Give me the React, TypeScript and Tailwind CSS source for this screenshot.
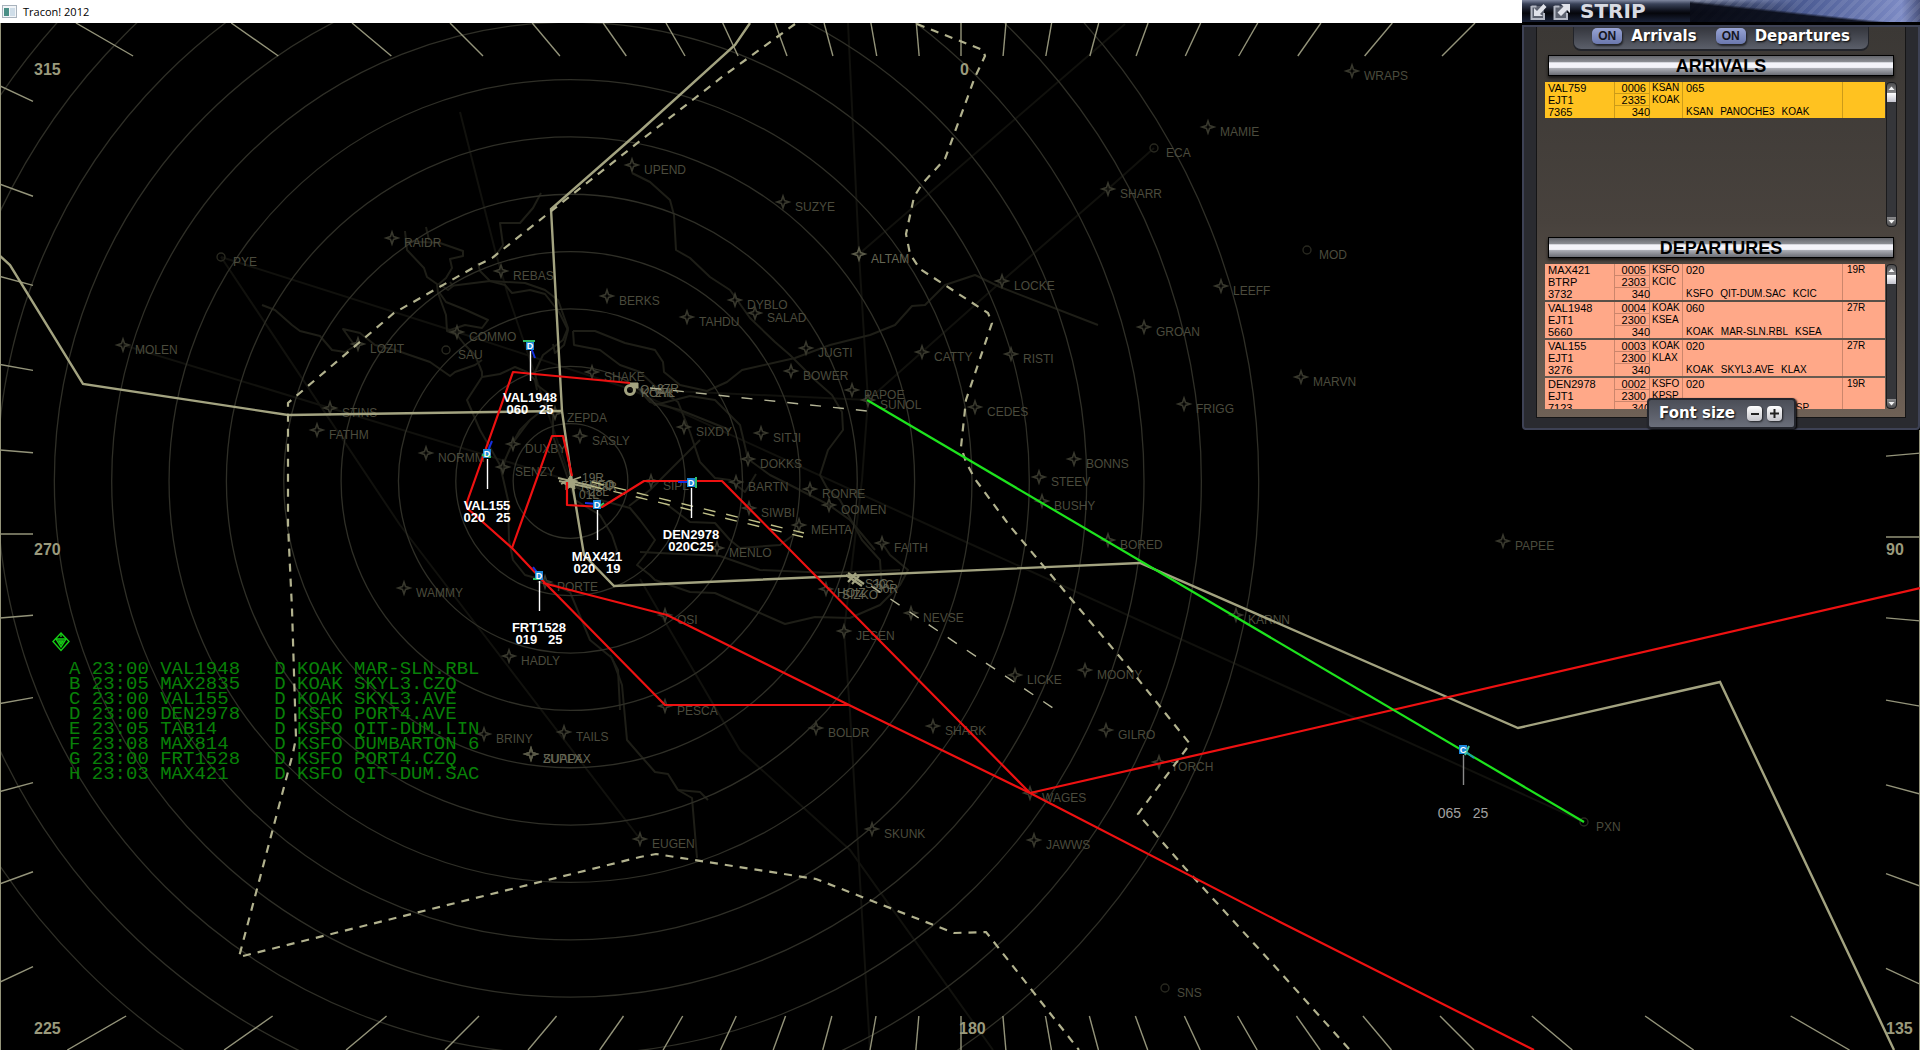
import React from "react";

type Pt = [number, number];

const CENTER: Pt = [570.5, 481];
const RINGS = [1, 2, 3, 4, 5, 6, 7, 8, 9, 10, 11, 12];
const RING_STEP = 57.35;

const FIXES: [string, number, number][] = [
  ["RAIDR", 392, 238], ["REBAS", 501, 271], ["MOLEN", 123, 345], ["COMMO", 457, 332],
  ["LOZIT", 358, 344], ["STINS", 330, 408], ["FATHM", 317, 430], ["NORMM", 426, 453],
  ["DUXBY", 513, 444], ["SENZY", 503, 467], ["SASLY", 580, 436], ["ZEPDA", 555, 413],
  ["BERKS", 607, 296], ["SHAKE", 592, 372], ["UPEND", 632, 165], ["SUZYE", 783, 202],
  ["DYBLO", 735, 300], ["SALAD", 755, 313], ["TAHDU", 687, 317], ["JUGTI", 806, 348],
  ["BOWER", 791, 371], ["PAPOE", 852, 390], ["SUNOL", 868, 400], ["CATTY", 922, 352],
  ["RISTI", 1011, 354], ["CEDES", 975, 407], ["LOCKE", 1002, 281], ["SHARR", 1108, 189],
  ["MAMIE", 1208, 127], ["LEEFF", 1221, 286], ["GROAN", 1144, 327], ["FRIGG", 1184, 404],
  ["BONNS", 1074, 459], ["STEEV", 1039, 477], ["BUSHY", 1042, 501], ["SIXDY", 684, 427],
  ["SITJI", 761, 433], ["DOKKS", 748, 459], ["BARTN", 736, 482], ["RONRE", 810, 489],
  ["OOMEN", 829, 505], ["SIWBI", 749, 508], ["MEHTA", 799, 525], ["SIPL", 651, 481],
  ["WRAPS", 1352, 71], ["MARVN", 1301, 377], ["PAPEE", 1503, 541], ["FAITH", 882, 543],
  ["MENLO", 717, 548], ["NEVSE", 911, 613], ["JESEN", 844, 631], ["MOONY", 1085, 670],
  ["LICKE", 1015, 675], ["BORED", 1108, 540], ["KARNN", 1236, 615], ["GILRO", 1106, 730],
  ["TORCH", 1159, 762], ["SHARK", 933, 726], ["BOLDR", 816, 728], ["PESCA", 665, 706],
  ["WAGES", 1030, 793], ["JAWWS", 1034, 840], ["SKUNK", 872, 829], ["EUGEN", 640, 839],
  ["PORTE", 545, 582], ["WAMMY", 404, 588], ["HADLY", 509, 656], ["BRINY", 484, 734],
  ["TAILS", 564, 732], ["OSI", 665, 615],
];

const BRIGHT_FIXES: [string, number, number][] = [
  ["ALTAM", 859, 254], ["ZUPLX", 531, 754], ["SUAPAX", 531, 754],
];

const VORS: [string, number, number][] = [
  ["PYE", 221, 257], ["SAU", 446, 350], ["ECA", 1154, 148], ["MOD", 1307, 250],
  ["PXN", 1584, 822], ["SNS", 1165, 988],
];

const AIRPORT_LABELS: [string, number, number][] = [
  ["KOAK", 641, 397], ["OAK", 640, 394], ["27R", 657, 393], ["27L", 655, 397],
  ["19R", 582, 482], ["KSFO", 581, 490], ["SFO", 590, 489], ["28R", 595, 491],
  ["01L", 579, 499], ["28L", 589, 496],
  ["SJC", 865, 588], ["30C", 872, 589], ["30R", 876, 593],
  ["HOIZ", 837, 597], ["SIZKO", 842, 599],
];

const AIRWAYS = [
  "221,257 457,332 630,389 966,542 1280,684 1584,822",
  "221,257 400,525 640,839",
  "123,345 330,408 571,481",
  "460,112 496,254 508,295 571,481",
  "640,579 740,750 850,850 993,1050",
  "848,23 859,254 868,400 862,480 844,631 850,712 870,1050",
  "1154,148 1108,189 1002,281 922,352 868,400 630,389",
  "859,254 1125,24",
];

const COAST = [
  "405,231 407,250 424,268 427,277 437,284 438,293 446,315 447,331 457,335 465,345 475,355 482,372 482,377 500,374 515,367 527,372 535,380 537,390",
  "426,227 429,240",
  "406,241 440,243 463,251 463,256 450,259 452,268 446,278 439,284 448,290 453,286 450,282",
  "541,193 533,208 520,223 500,223 503,245 494,258",
  "450,286 490,281 525,283 545,290 558,300 568,328 563,340 543,355 535,372 537,385 550,395 545,408 530,420 520,430 512,444 505,460 503,470",
  "439,292 446,302 466,310 488,320 482,328 465,325 447,331",
  "478,263 480,271 490,281 505,285 512,293 530,290 545,294 559,312 568,330 564,345 555,353 553,344",
  "573,331 574,345 600,350 620,365 640,372 655,386 678,402 690,432 700,462 715,478 730,480 745,492 756,474",
  "573,331 595,331 625,343 655,350 663,362 664,372 680,385 707,391 727,382 742,370 795,358 830,345 870,335 895,325 912,306 925,305 945,285 975,275 1000,287 1098,325",
  "262,305 275,310 292,325 300,331 320,336 332,350 345,352 355,346 343,329 360,333 375,345 395,350 430,362 450,376 455,372 475,365 482,360",
  "482,377 467,400 480,430 500,465 508,500 509,540 513,560 525,575 543,580 570,592 590,640 612,658 622,685 627,740 640,755 655,772 668,774 678,790 692,798 697,858",
  "553,411 553,436 565,470 575,500 600,515 612,535 617,550 614,560",
  "512,444 530,420",
  "610,655 618,670 620,710",
  "678,790 700,792 708,800",
  "632,173 650,182 670,200 674,215 676,250 690,258 710,277 730,290 750,318 775,342 790,355 815,380 832,395 842,412 843,430 828,450 820,475 827,488 840,500 862,540 880,560 882,590",
  "636,386 655,405 690,396 715,400 740,425 748,459 770,475 790,485 829,505 850,520 875,550",
  "636,386 650,402 680,410 730,430",
  "571,484 600,500 630,508 640,520 655,540 645,555 637,565 650,575 655,580 690,592 715,593 760,613 785,624 815,617 850,618 880,605 900,585 908,570 890,555 882,543",
  "629,506 650,490 700,440",
  "665,503 690,522 715,523 730,540 740,548 780,545 800,530",
  "640,552 720,556 760,570 830,573 900,570",
];

const SOLID_BOUNDARIES = [
  "0,256 10,265 83,384 288,415 562,411",
  "750,23 735,45 640,131 551,209 562,411 572,482 584,555 614,586 1140,563 1518,728 1720,682 1894,1050",
];

const DASHED_BOUNDARIES = [
  "795,24 722,77 640,141 545,216 492,258 478,265 394,313 288,403 288,525 292,609 296,738 293,753 239,957 640,857 656,854 816,879 954,933 986,932 1079,1050",
  "917,24 983,50 985,56 975,77 945,159 922,184 914,197 906,234 910,254 920,269 988,313 992,323 966,400 961,447 966,462 975,479 1009,525 1130,669 1190,744 1138,814 1185,868 1280,972 1350,1050",
];

const DEPARTURE_ROUTES = [
  "630,383 513,372 467,502 467,508 485,524 512,548 545,583",
  "572,476 563,436 552,436 512,548",
  "567,482 567,505 602,507 644,481 722,481 1030,793",
  "545,583 665,705 849,705",
  "543,583 667,615 849,705 1030,793 1280,922 1534,1050",
  "1030,793 1280,736 1920,588",
];

const AIRCRAFT = [
  { id: "VAL1948", alt: "060   25", x: 530, y: 345, tail: [5, 13], head: [-7, -4, 5, -4] },
  { id: "VAL155", alt: "020   25", x: 487, y: 453, tail: [5, -12], head: [-5, 2, 4, 4] },
  { id: "MAX421", alt: "020   19", x: 597, y: 504, tail: [-12, -1], head: [3, 2, 7, -1] },
  { id: "DEN2978", alt: "020C25", x: 691, y: 482, tail: [-13, 0], head: [5, -5, 5, 6] },
  { id: "FRT1528", alt: "019   25", x: 539, y: 575, tail: [-6, -8], head: [-6, 4, 0, 4] },
];

const FLIGHTS = [
  "A 23:00 VAL1948   D KOAK MAR-SLN.RBL",
  "B 23:05 MAX2835   D KOAK SKYL3.CZQ",
  "C 23:00 VAL155    D KOAK SKYL3.AVE",
  "D 23:00 DEN2978   D KSFO PORT4.AVE",
  "E 23:05 TAB14     D KSFO QIT-DUM.LIN",
  "F 23:08 MAX814    D KSFO DUMBARTON 6",
  "G 23:00 FRT1528   D KSFO PORT4.CZQ",
  "H 23:03 MAX421    D KSFO QIT-DUM.SAC",
];

const BEARINGS: [string, number, number][] = [
  ["315", 34, 75], ["0", 960, 75], ["270", 34, 555], ["90", 1886, 555],
  ["225", 34, 1034], ["180", 959, 1034], ["135", 1886, 1034],
];

/* Compass ticks run from the inner frame to the map's edge, every five degrees. */
function compassTicks() {
  const cx = 961;
  const ticks: [number, number, number, number][] = [];
  for (let deg = 0; deg < 360; deg += 5) {
    const a = (deg * Math.PI) / 180;
    const dx = Math.sin(a);
    const dy = -Math.cos(a);
    const cy = dx < -0.01 ? 534 : 537;
    const reach = (left: number, top: number, right: number, bottom: number) => {
      const tx = dx > 1e-9 ? (right - cx) / dx : dx < -1e-9 ? (left - cx) / dx : Infinity;
      const ty = dy > 1e-9 ? (bottom - cy) / dy : dy < -1e-9 ? (top - cy) / dy : Infinity;
      return Math.min(tx, ty);
    };
    const a0 = reach(33, 56, 1886, 1016);
    const a1 = reach(0, 23, 1920, 1050);
    ticks.push([cx + dx * a0, cy + dy * a0, cx + dx * a1, cy + dy * a1]);
  }
  return ticks;
}

function Star({ x, y }: { x: number; y: number }) {
  return (
    <path
      d={`M${x} ${y - 6}l1.5 4.5l4.5 1.5l-4.5 1.5l-1.5 4.5l-1.5 -4.5l-4.5 -1.5l4.5 -1.5z`}
      fill="none"
    />
  );
}

function RadarMap() {
  return (
    <svg
      viewBox="0 23 1920 1027"
      role="img"
      aria-label="Radar scope"
      className="block h-auto w-full bg-black font-['Liberation_Sans',Arial,sans-serif] [&_text]:whitespace-pre"
    >
      <g fill="none" stroke="#11110d" strokeWidth="2">
        {AIRWAYS.map((p) => <polyline key={p} points={p} />)}
      </g>
      <g fill="none" stroke="#1e1e17" strokeWidth="2" strokeLinejoin="round">
        {COAST.map((p) => <polyline key={p} points={p} />)}
      </g>
      <g fill="none" stroke="#2f2f27" strokeWidth="1.3">
        {RINGS.map((n) => <circle key={n} cx={CENTER[0]} cy={CENTER[1]} r={n * RING_STEP} />)}
      </g>
      <g stroke="#94947a" strokeWidth="1.4">
        {compassTicks().map(([a, b, c, d], i) => <line key={i} x1={a} y1={b} x2={c} y2={d} />)}
        <path d="M.5 23V1050M1919.5 23V1050" strokeWidth="1" />
      </g>

      <g stroke="#38382d" strokeWidth="1.6">
        {FIXES.map(([n, x, y]) => <Star key={n} x={x} y={y} />)}
      </g>
      <g stroke="#5a5a48" strokeWidth="1.6">
        {BRIGHT_FIXES.map(([n, x, y]) => <Star key={n} x={x} y={y} />)}
      </g>
      <g stroke="#38382d" strokeWidth="1.6">
        <Star x={826} y={589} />
      </g>
      <g fill="none" stroke="#28281f" strokeWidth="1.4">
        {VORS.map(([n, x, y]) => <circle key={n} cx={x} cy={y} r="4" />)}
      </g>
      <g className="fill-[#4b4b3d] text-[12px]">
        {[...FIXES, ...VORS].map(([n, x, y]) => <text key={n} x={x + 12} y={y + 9}>{n}</text>)}
      </g>
      <g className="fill-[#666654] text-[12px]">
        {BRIGHT_FIXES.map(([n, x, y]) => <text key={n} x={x + 12} y={y + 9}>{n}</text>)}
        {AIRPORT_LABELS.map(([n, x, y]) => <text key={n} x={x} y={y}>{n}</text>)}
      </g>

      <g fill="none" stroke="#a3a380" strokeWidth="2.4">
        {SOLID_BOUNDARIES.map((p) => <polyline key={p} points={p} />)}
      </g>
      <g fill="none" stroke="#b2b28e" strokeWidth="2.2" strokeDasharray="8 7">
        {DASHED_BOUNDARIES.map((p) => <polyline key={p} points={p} />)}
      </g>
      <g fill="none" stroke="#b4b496" strokeWidth="1.4" strokeDasharray="11 12">
        <path d="M650 388L867 411" />
        <path d="M868 584L1056 710" strokeDashoffset="-4" />
      </g>
      <g fill="none" stroke="#c0c088" strokeWidth="1.4" strokeDasharray="12 11">
        <path d="M592 482L804 533" />
        <path d="M591 486L803 537" />
      </g>

      <g fill="#a3a380" stroke="#a3a380">
        <circle cx="630" cy="390" r="4.5" fill="none" strokeWidth="3" />
        <path d="M630 383h8v5h-5z" />
        <path d="M558 478l34 8M559 481l32 7M561 484l20 -7" fill="none" strokeWidth="1.8" />
        <path d="M570 476l2.500 4l5 1l-3.500 3l1 5l-5 -2l-4 3l0 -5l-4 -3l5 -1z" />
        <path d="M846 575l16 11M848 573l16 11M848 582l8 -9M852 584l7 -8" fill="none" strokeWidth="2.2" />
      </g>

      <g fill="none" stroke="#ee1111" strokeWidth="2.2" strokeLinejoin="round">
        {DEPARTURE_ROUTES.map((p) => <polyline key={p} points={p} />)}
      </g>
      <line x1="867" y1="400" x2="1584" y2="822" stroke="#1de31d" strokeWidth="2.2" />

      {AIRCRAFT.map((a) => (
        <g key={a.id} strokeWidth="2">
          <line x1={a.x} y1={a.y} x2={a.x + a.tail[0]} y2={a.y + a.tail[1]} stroke="#1530e0" />
          <rect x={a.x - 4} y={a.y - 4} width="8" height="9" fill="#1c86d8" />
          <path d={`M${a.x + a.head[0]} ${a.y + a.head[1]}L${a.x + a.head[2]} ${a.y + a.head[3]}`} stroke="#2fbf66" />
          <text x={a.x} y={a.y + 4} textAnchor="middle" className="fill-white text-[9px] font-bold">D</text>
          <line x1={a.x + 0.5} y1={a.y + 6} x2={a.x + 0.5} y2={a.y + 36} stroke="#fff" strokeWidth="1.4" />
          <g textAnchor="middle" className="fill-white text-[13px] font-bold">
            <text x={a.x} y={a.y + 57}>{a.id}</text>
            <text x={a.x} y={a.y + 69}>{a.alt}</text>
          </g>
        </g>
      ))}
      <g strokeWidth="2">
        <line x1="1466" y1="752" x2="1474" y2="758" stroke="#1a9ab0" />
        <rect x="1459" y="745" width="8" height="9" fill="#1c86d8" />
        <path d="M1465 755l4 -9" stroke="#3fc9a0" />
        <text x="1463" y="753" textAnchor="middle" className="fill-white text-[9px] font-bold">C</text>
        <line x1="1463.500" y1="755" x2="1463.500" y2="785" stroke="#8a8a8a" strokeWidth="1.4" />
        <text x="1463" y="818" textAnchor="middle" className="fill-[#a0a0a0] text-[14px]">065   25</text>
      </g>

      <g className="fill-[#9a9a7c] text-[16px] font-bold">
        {BEARINGS.map(([n, x, y]) => <text key={n} x={x} y={y}>{n}</text>)}
      </g>

      <g fill="none" stroke="#16cf16" strokeWidth="1.4">
        <path d="M61 633l8 8.500l-8 9l-8 -9z" />
        <path d="M56 639h10l-5 8zM59 641h4l-2 3zM61 633v4" />
      </g>
      <g className="fill-[#088008] font-['Liberation_Mono',monospace] text-[19px]">
        {FLIGHTS.map((f, i) => <text key={f} x="69" y={674 + i * 15}>{f}</text>)}
      </g>
    </svg>
  );
}

type Strip = {
  id: string; type: string; code: string; seq: string; time: string; fl: string;
  from: string; to: string; alt: string; route: string; rwy: string;
};

const ARRIVALS: Strip[] = [
  { id: "VAL759", type: "EJT1", code: "7365", seq: "0006", time: "2335", fl: "340", from: "KSAN", to: "KOAK", alt: "065", route: "PANOCHE3", rwy: "" },
];

const DEPARTURES: Strip[] = [
  { id: "MAX421", type: "BTRP", code: "3732", seq: "0005", time: "2303", fl: "340", from: "KSFO", to: "KCIC", alt: "020", route: "QIT-DUM.SAC", rwy: "19R" },
  { id: "VAL1948", type: "EJT1", code: "5660", seq: "0004", time: "2300", fl: "340", from: "KOAK", to: "KSEA", alt: "060", route: "MAR-SLN.RBL", rwy: "27R" },
  { id: "VAL155", type: "EJT1", code: "3276", seq: "0003", time: "2300", fl: "340", from: "KOAK", to: "KLAX", alt: "020", route: "SKYL3.AVE", rwy: "27R" },
  { id: "DEN2978", type: "EJT1", code: "7123", seq: "0002", time: "2300", fl: "340", from: "KSFO", to: "KPSP", alt: "020", route: "PORT4.AVE", rwy: "19R" },
];

function StripTable({ label, strips, tone }: { label: string; strips: Strip[]; tone: string }) {
  return (
    <div className="min-w-0 flex-1 overflow-hidden">
      <div className="flex flex-col gap-[2px]">
        {strips.map((s) => (
          <table key={s.id} aria-label={`${label} ${s.id}`} className={`w-full table-fixed border-separate border-spacing-0 text-[11px] leading-3 text-black ${tone}`}>
            <colgroup>
              <col className="w-[70px]" />
              <col className="w-[35px]" />
              <col className="w-[33px]" />
              <col />
              <col className="w-[42px]" />
            </colgroup>
            <tbody className="[&_td]:h-3 [&_td]:p-0 [&_td]:align-top [&_td]:leading-3 [&_td]:whitespace-nowrap">
              <tr>
                <td className="shadow-[inset_-1px_0_#0003]"><span className="block pl-[3px]">{s.id}</span></td>
                <td className="text-right shadow-[inset_-1px_-1px_#0003]"><span className="block pr-1">{s.seq}</span></td>
                <td className="text-[10px] shadow-[inset_-1px_0_#0003]"><span className="block pl-[2px]">{s.from}</span></td>
                <td className="shadow-[inset_-1px_0_#0003]"><span className="block pl-[3px]">{s.alt}</span></td>
                <td className="text-[10px]"><span className="block pl-1">{s.rwy}</span></td>
              </tr>
              <tr>
                <td className="shadow-[inset_-1px_0_#0003]"><span className="block pl-[3px]">{s.type}</span></td>
                <td className="text-right shadow-[inset_-1px_-1px_#0003]"><span className="block pr-1">{s.time}</span></td>
                <td className="text-[10px] shadow-[inset_-1px_0_#0003]"><span className="block pl-[2px]">{s.to}</span></td>
                <td className="shadow-[inset_-1px_0_#0003]" />
                <td />
              </tr>
              <tr>
                <td className="shadow-[inset_-1px_0_#0003]"><span className="block pl-[3px]">{s.code}</span></td>
                <td className="text-right shadow-[inset_-1px_0_#0003]">{s.fl}</td>
                <td className="shadow-[inset_-1px_0_#0003]" />
                <td className="text-[10px] shadow-[inset_-1px_0_#0003]">
                  <span className="flex gap-[7px] pl-[3px]">
                    <span>{s.from}</span>
                    <span>{s.route}</span>
                    <span>{s.to}</span>
                  </span>
                </td>
                <td />
              </tr>
            </tbody>
          </table>
        ))}
      </div>
    </div>
  );
}

function Arrow({ down }: { down?: boolean }) {
  return (
    <svg viewBox="0 0 9 9" className="size-[9px]" aria-hidden="true">
      <path d={down ? "M1.500 3h6L4.500 6.500z" : "M1.500 6h6L4.500 2.500z"} fill="#f4f4f4" />
    </svg>
  );
}

function Scroller({ label }: { label: string }) {
  return (
    <div className="ml-px flex w-[11px] flex-col rounded-sm border border-[#1b1b1d] bg-[#35363a]">
      <button aria-label={`Scroll ${label} up`} className="flex h-[10px] items-center justify-center rounded-t-sm bg-gradient-to-b from-[#4c4c4e] to-[#8a8a8c]"><Arrow /></button>
      <div className="h-[9px] bg-gradient-to-b from-white to-[#c4c4ce]" />
      <div className="flex-1" />
      <button aria-label={`Scroll ${label} down`} className="flex h-[9px] items-center justify-center rounded-b-sm bg-gradient-to-b from-[#8a8a8c] to-[#4c4c4e]"><Arrow down /></button>
    </div>
  );
}

function Banner({ children }: { children: string }) {
  return (
    <h2 className="mx-[3px] flex h-[21px] items-center justify-center border border-black bg-[linear-gradient(#63656b_0,#8b8d93_30%,#f4f4fa_36%,#f4f4fa_60%,#a9abb2_66%,#6c6e75_100%)] text-[18px] leading-none font-bold text-black shadow-[0_2px_3px_#000a]">
      {children}
    </h2>
  );
}

function Toggle({ label }: { label: string }) {
  return (
    <div className="flex items-center gap-[9px]">
      <button
        id={`toggle-${label}`}
        aria-pressed="true"
        aria-label={`${label} on`}
        className="h-4 w-[30px] rounded-[5px] bg-gradient-to-b from-[#98a4d4] to-[#6b78ae] text-[12px] leading-none font-bold text-[#14161f] shadow-[1px_2px_2px_#0009]"
      >
        ON
      </button>
      <label htmlFor={`toggle-${label}`} className="font-['DejaVu_Sans',sans-serif] text-[15px] leading-none font-bold text-white [text-shadow:1px_1px_2px_#000]">
        {label}
      </label>
    </div>
  );
}

function WindowArrow({ out }: { out?: boolean }) {
  return (
    <svg viewBox="0 0 18 18" className="size-[18px]" aria-hidden="true">
      <rect x="1" y="4" width="13" height="13" fill="#5d6270" />
      <path d="M1.500 4v13h12.500v-6M1.500 4.500h5" fill="none" stroke="#b4b8c4" strokeWidth="2" />
      <path d={out ? "M8 2h9v9l-3 -3l-6 6l-3.500 -3.500l6 -6z" : "M4 14V6l3 3l6.500 -7l3 3L10 12l3 2z"} fill="#e0e2ea" />
    </svg>
  );
}

function StripPanel() {
  return (
    <section className="absolute top-0 right-0 flex w-[398px] flex-col bg-black font-['Liberation_Sans',Arial,sans-serif]" aria-label="Strip">
      <header className="flex h-[23px] items-center gap-[5px] border-b border-black bg-[linear-gradient(#8088a0_0,#3a4258_18%,#10131e_48%,#05060b_60%,#1a2238_100%)] pl-2">
        <button aria-label="Dock window"><WindowArrow /></button>
        <button aria-label="Detach window"><WindowArrow out /></button>
        <h1 className="pl-1 font-['DejaVu_Sans',sans-serif] text-[20px] leading-none font-bold text-[#d8dae2]">STRIP</h1>
        <div className="ml-auto h-full w-[230px] bg-[linear-gradient(6deg,#080b16e6_40%,#0000_46%),repeating-linear-gradient(135deg,#0000_0_4px,#ffffff14_4px_8px),linear-gradient(90deg,#3d4a7a00,#4c5c94_50%,#7c8ac4_92%,#49527c)]" />
      </header>
      <div className="mt-[2px] flex flex-col rounded-b border-2 border-[#3e4255] bg-[#2a2b30] px-[12px] pb-[10px]">
        <div className="flex flex-col border-x border-b border-[#151516] bg-gradient-to-b from-[#3b3835] via-[#48423d] to-[#6f6156] px-2 pb-2">
          <div className="mx-auto flex h-[24px] w-[296px] items-center justify-center gap-[19px] rounded-b-lg border-x border-b-2 border-[#22242a] bg-gradient-to-b from-[#34363d] to-[#5b5f6a] pb-1">
            <Toggle label="Arrivals" />
            <Toggle label="Departures" />
          </div>
          <div className="mt-1 flex flex-col">
            <Banner>ARRIVALS</Banner>
            <div className="mt-[6px] flex h-[145px]">
              <StripTable label="Arrival" strips={ARRIVALS} tone="bg-[#ffc220]" />
              <Scroller label="arrivals" />
            </div>
          </div>
          <div className="mt-[10px] flex flex-col">
            <Banner>DEPARTURES</Banner>
            <div className="mt-[6px] flex h-[145px]">
              <StripTable label="Departure" strips={DEPARTURES} tone="bg-[#ffa888]" />
              <Scroller label="departures" />
            </div>
          </div>
        </div>
      </div>
      <div className="absolute bottom-px left-[125px] flex h-[31px] w-[149px] items-center rounded-sm border-2 border-[#23252c] bg-gradient-to-b from-[#4b4e57] to-[#6a6e7a] pl-[10px] shadow-[1px_1px_2px_#000]">
        <span className="w-[88px] font-['DejaVu_Sans',sans-serif] text-[15px] leading-none font-bold whitespace-nowrap text-white [text-shadow:1px_1px_2px_#000]">Font size</span>
        <div className="flex gap-[5px]">
          <button aria-label="Decrease font size" className="flex size-[15px] items-center justify-center rounded bg-gradient-to-b from-white to-[#c6c6cc] shadow-[1px_1px_2px_#000a]">
            <span className="h-[2px] w-2 bg-[#222]" />
          </button>
          <button aria-label="Increase font size" className="flex size-[15px] items-center justify-center rounded bg-gradient-to-b from-white to-[#c6c6cc] shadow-[1px_1px_2px_#000a]">
            <svg viewBox="0 0 9 9" className="size-[9px]" aria-hidden="true"><path d="M0 4.500h9M4.500 0v9" stroke="#222" strokeWidth="2" /></svg>
          </button>
        </div>
      </div>
    </section>
  );
}

export default function App() {
  return (
    <div className="relative min-h-screen overflow-hidden bg-black">
      <header className="flex h-[23px] items-center gap-[6px] bg-white pl-[2px] font-['Open_Sans',sans-serif] text-[11px] leading-none text-black">
        <svg viewBox="0 0 15 13" className="h-[13px] w-[15px]" aria-hidden="true">
          <rect x=".5" y=".5" width="14" height="12" fill="#f2f5f8" stroke="#a9b3bd" />
          <rect x="2" y="3" width="5" height="8" fill="#4a8f86" />
          <rect x="8" y="3" width="5" height="8" fill="#cfdde8" />
        </svg>
        <span>Tracon! 2012</span>
      </header>
      <main>
        <RadarMap />
      </main>
      <StripPanel />
    </div>
  );
}
